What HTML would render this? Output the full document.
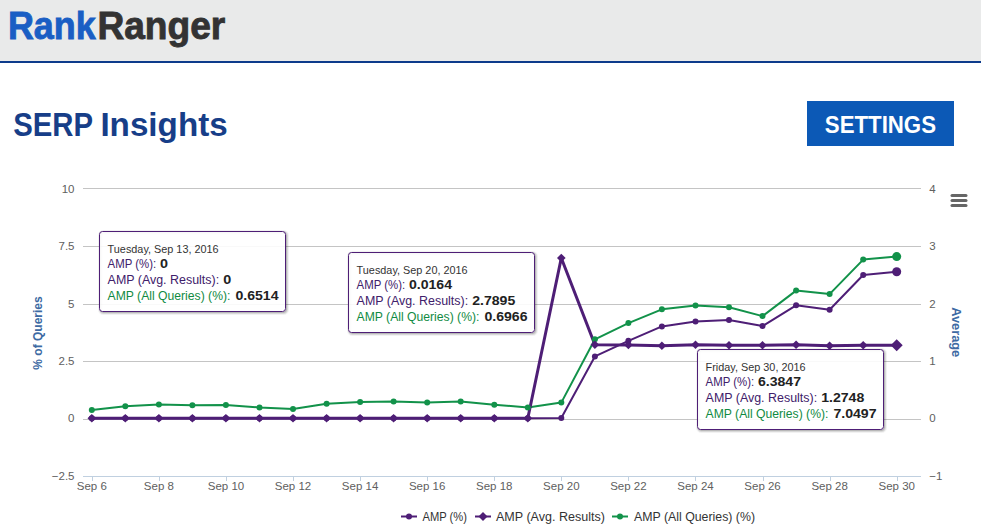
<!DOCTYPE html>
<html><head><meta charset="utf-8"><style>
html,body{margin:0;padding:0;width:981px;height:529px;overflow:hidden;background:#fff;}
svg{position:absolute;left:0;top:0;font-family:"Liberation Sans",sans-serif;}
</style></head><body>
<svg width="981" height="529" viewBox="0 0 981 529">
<rect x="0" y="0" width="981" height="61" fill="#e9eaea"/>
<rect x="0" y="61" width="981" height="2" fill="#0d3b8b"/>
<text x="7.90" y="39.20" font-size="39.4" font-weight="bold" fill="#1a5ec4" textLength="87.80" lengthAdjust="spacingAndGlyphs" stroke="#1a5ec4" stroke-width="0.9">Rank</text>
<text x="97.40" y="39.20" font-size="39.4" font-weight="bold" fill="#333333" textLength="127.90" lengthAdjust="spacingAndGlyphs" stroke="#333333" stroke-width="0.9">Ranger</text>
<text x="13.20" y="135.60" font-size="32.5" font-weight="bold" fill="#173e88" textLength="79.90" lengthAdjust="spacingAndGlyphs">SERP</text>
<text x="100.40" y="135.60" font-size="32.5" font-weight="bold" fill="#173e88" textLength="127.30" lengthAdjust="spacingAndGlyphs">Insights</text>
<rect x="807" y="101" width="147" height="45" fill="#0c59b6"/>
<text x="824.80" y="132.50" font-size="23.5" font-weight="bold" fill="#ffffff" textLength="111.20" lengthAdjust="spacingAndGlyphs">SETTINGS</text>
<line x1="83" y1="188.5" x2="921" y2="188.5" stroke="#c4c4c4" stroke-width="1"/>
<line x1="83" y1="246.5" x2="921" y2="246.5" stroke="#c4c4c4" stroke-width="1"/>
<line x1="83" y1="304.5" x2="921" y2="304.5" stroke="#c4c4c4" stroke-width="1"/>
<line x1="83" y1="361.5" x2="921" y2="361.5" stroke="#c4c4c4" stroke-width="1"/>
<line x1="83" y1="419.5" x2="921" y2="419.5" stroke="#c4c4c4" stroke-width="1"/>
<line x1="83" y1="476.5" x2="921" y2="476.5" stroke="#c0d0e0" stroke-width="1"/>
<line x1="92.5" y1="476" x2="92.5" y2="481" stroke="#c0d0e0" stroke-width="1"/>
<line x1="159.5" y1="476" x2="159.5" y2="481" stroke="#c0d0e0" stroke-width="1"/>
<line x1="226.5" y1="476" x2="226.5" y2="481" stroke="#c0d0e0" stroke-width="1"/>
<line x1="293.5" y1="476" x2="293.5" y2="481" stroke="#c0d0e0" stroke-width="1"/>
<line x1="360.5" y1="476" x2="360.5" y2="481" stroke="#c0d0e0" stroke-width="1"/>
<line x1="427.5" y1="476" x2="427.5" y2="481" stroke="#c0d0e0" stroke-width="1"/>
<line x1="494.5" y1="476" x2="494.5" y2="481" stroke="#c0d0e0" stroke-width="1"/>
<line x1="561.5" y1="476" x2="561.5" y2="481" stroke="#c0d0e0" stroke-width="1"/>
<line x1="628.5" y1="476" x2="628.5" y2="481" stroke="#c0d0e0" stroke-width="1"/>
<line x1="695.5" y1="476" x2="695.5" y2="481" stroke="#c0d0e0" stroke-width="1"/>
<line x1="763.5" y1="476" x2="763.5" y2="481" stroke="#c0d0e0" stroke-width="1"/>
<line x1="830.5" y1="476" x2="830.5" y2="481" stroke="#c0d0e0" stroke-width="1"/>
<line x1="897.5" y1="476" x2="897.5" y2="481" stroke="#c0d0e0" stroke-width="1"/>
<text x="74.50" y="193.00" font-size="11.5" fill="#606060" text-anchor="end">10</text>
<text x="74.50" y="250.30" font-size="11.5" fill="#606060" text-anchor="end">7.5</text>
<text x="74.50" y="307.60" font-size="11.5" fill="#606060" text-anchor="end">5</text>
<text x="74.50" y="365.00" font-size="11.5" fill="#606060" text-anchor="end">2.5</text>
<text x="74.50" y="422.30" font-size="11.5" fill="#606060" text-anchor="end">0</text>
<text x="74.50" y="479.80" font-size="11.5" fill="#606060" text-anchor="end">−2.5</text>
<text x="929.20" y="193.00" font-size="11.5" fill="#606060">4</text>
<text x="929.20" y="250.30" font-size="11.5" fill="#606060">3</text>
<text x="929.20" y="307.60" font-size="11.5" fill="#606060">2</text>
<text x="929.20" y="365.00" font-size="11.5" fill="#606060">1</text>
<text x="929.20" y="422.30" font-size="11.5" fill="#606060">0</text>
<text x="929.20" y="479.80" font-size="11.5" fill="#606060">−1</text>
<text x="91.80" y="490.00" font-size="11.5" fill="#606060" text-anchor="middle">Sep 6</text>
<text x="158.88" y="490.00" font-size="11.5" fill="#606060" text-anchor="middle">Sep 8</text>
<text x="225.95" y="490.00" font-size="11.5" fill="#606060" text-anchor="middle">Sep 10</text>
<text x="293.03" y="490.00" font-size="11.5" fill="#606060" text-anchor="middle">Sep 12</text>
<text x="360.10" y="490.00" font-size="11.5" fill="#606060" text-anchor="middle">Sep 14</text>
<text x="427.18" y="490.00" font-size="11.5" fill="#606060" text-anchor="middle">Sep 16</text>
<text x="494.25" y="490.00" font-size="11.5" fill="#606060" text-anchor="middle">Sep 18</text>
<text x="561.33" y="490.00" font-size="11.5" fill="#606060" text-anchor="middle">Sep 20</text>
<text x="628.40" y="490.00" font-size="11.5" fill="#606060" text-anchor="middle">Sep 22</text>
<text x="695.48" y="490.00" font-size="11.5" fill="#606060" text-anchor="middle">Sep 24</text>
<text x="762.55" y="490.00" font-size="11.5" fill="#606060" text-anchor="middle">Sep 26</text>
<text x="829.62" y="490.00" font-size="11.5" fill="#606060" text-anchor="middle">Sep 28</text>
<text x="896.70" y="490.00" font-size="11.5" fill="#606060" text-anchor="middle">Sep 30</text>
<text transform="translate(41.5 333) rotate(-90)" text-anchor="middle" font-size="12" font-weight="bold" fill="#3d6aa3">% of Queries</text>
<text transform="translate(952 332.2) rotate(90)" text-anchor="middle" font-size="12" font-weight="bold" fill="#3d6aa3" textLength="50" lengthAdjust="spacingAndGlyphs">Average</text>
<line x1="952" y1="195.5" x2="966" y2="195.5" stroke="#666" stroke-width="3" stroke-linecap="round"/>
<line x1="952" y1="200.5" x2="966" y2="200.5" stroke="#666" stroke-width="3" stroke-linecap="round"/>
<line x1="952" y1="205.5" x2="966" y2="205.5" stroke="#666" stroke-width="3" stroke-linecap="round"/>
<path d="M91.8 410.0 L125.3 406.2 L158.9 404.4 L192.4 405.2 L225.9 404.9 L259.5 407.5 L293.0 409.0 L326.6 403.7 L360.1 402.0 L393.6 401.4 L427.2 402.5 L460.7 401.4 L494.3 404.8 L527.8 407.4 L561.3 402.6 L594.9 339.3 L628.4 323.1 L661.9 309.3 L695.5 305.4 L729.0 307.3 L762.5 316.1 L796.1 290.6 L829.6 294.1 L863.2 259.6 L896.7 256.6" fill="none" stroke="#12924a" stroke-width="2" stroke-linejoin="round"/>
<path d="M91.8 418.3 L125.3 418.3 L158.9 418.3 L192.4 418.3 L225.9 418.3 L259.5 418.3 L293.0 418.3 L326.6 418.3 L360.1 418.3 L393.6 418.3 L427.2 418.3 L460.7 418.3 L494.3 418.3 L527.8 418.3 L561.3 418.0 L594.9 356.4 L628.4 340.8 L661.9 326.4 L695.5 321.4 L729.0 320.0 L762.5 326.1 L796.1 305.3 L829.6 309.7 L863.2 275.0 L896.7 271.7" fill="none" stroke="#4e1e76" stroke-width="2" stroke-linejoin="round"/>
<path d="M91.8 418.3 L125.3 418.3 L158.9 418.3 L192.4 418.3 L225.9 418.3 L259.5 418.3 L293.0 418.3 L326.6 418.3 L360.1 418.3 L393.6 418.3 L427.2 418.3 L460.7 418.3 L494.3 418.3 L527.8 418.3 L561.3 258.0 L594.9 344.7 L628.4 345.0 L661.9 345.7 L695.5 344.7 L729.0 345.2 L762.5 345.2 L796.1 344.7 L829.6 345.7 L863.2 345.2 L896.7 345.3" fill="none" stroke="#4e1e76" stroke-width="3" stroke-linejoin="round"/>
<circle cx="91.8" cy="410.0" r="3" fill="#12924a"/>
<circle cx="125.3" cy="406.2" r="3" fill="#12924a"/>
<circle cx="158.9" cy="404.4" r="3" fill="#12924a"/>
<circle cx="192.4" cy="405.2" r="3" fill="#12924a"/>
<circle cx="225.9" cy="404.9" r="3" fill="#12924a"/>
<circle cx="259.5" cy="407.5" r="3" fill="#12924a"/>
<circle cx="293.0" cy="409.0" r="3" fill="#12924a"/>
<circle cx="326.6" cy="403.7" r="3" fill="#12924a"/>
<circle cx="360.1" cy="402.0" r="3" fill="#12924a"/>
<circle cx="393.6" cy="401.4" r="3" fill="#12924a"/>
<circle cx="427.2" cy="402.5" r="3" fill="#12924a"/>
<circle cx="460.7" cy="401.4" r="3" fill="#12924a"/>
<circle cx="494.3" cy="404.8" r="3" fill="#12924a"/>
<circle cx="527.8" cy="407.4" r="3" fill="#12924a"/>
<circle cx="561.3" cy="402.6" r="3" fill="#12924a"/>
<circle cx="594.9" cy="339.3" r="3" fill="#12924a"/>
<circle cx="628.4" cy="323.1" r="3" fill="#12924a"/>
<circle cx="661.9" cy="309.3" r="3" fill="#12924a"/>
<circle cx="695.5" cy="305.4" r="3" fill="#12924a"/>
<circle cx="729.0" cy="307.3" r="3" fill="#12924a"/>
<circle cx="762.5" cy="316.1" r="3" fill="#12924a"/>
<circle cx="796.1" cy="290.6" r="3" fill="#12924a"/>
<circle cx="829.6" cy="294.1" r="3" fill="#12924a"/>
<circle cx="863.2" cy="259.6" r="3" fill="#12924a"/>
<circle cx="896.7" cy="256.6" r="4.5" fill="#12924a"/>
<circle cx="91.8" cy="418.3" r="3" fill="#4e1e76"/>
<circle cx="125.3" cy="418.3" r="3" fill="#4e1e76"/>
<circle cx="158.9" cy="418.3" r="3" fill="#4e1e76"/>
<circle cx="192.4" cy="418.3" r="3" fill="#4e1e76"/>
<circle cx="225.9" cy="418.3" r="3" fill="#4e1e76"/>
<circle cx="259.5" cy="418.3" r="3" fill="#4e1e76"/>
<circle cx="293.0" cy="418.3" r="3" fill="#4e1e76"/>
<circle cx="326.6" cy="418.3" r="3" fill="#4e1e76"/>
<circle cx="360.1" cy="418.3" r="3" fill="#4e1e76"/>
<circle cx="393.6" cy="418.3" r="3" fill="#4e1e76"/>
<circle cx="427.2" cy="418.3" r="3" fill="#4e1e76"/>
<circle cx="460.7" cy="418.3" r="3" fill="#4e1e76"/>
<circle cx="494.3" cy="418.3" r="3" fill="#4e1e76"/>
<circle cx="527.8" cy="418.3" r="3" fill="#4e1e76"/>
<circle cx="561.3" cy="418.0" r="3" fill="#4e1e76"/>
<circle cx="594.9" cy="356.4" r="3" fill="#4e1e76"/>
<circle cx="628.4" cy="340.8" r="3" fill="#4e1e76"/>
<circle cx="661.9" cy="326.4" r="3" fill="#4e1e76"/>
<circle cx="695.5" cy="321.4" r="3" fill="#4e1e76"/>
<circle cx="729.0" cy="320.0" r="3" fill="#4e1e76"/>
<circle cx="762.5" cy="326.1" r="3" fill="#4e1e76"/>
<circle cx="796.1" cy="305.3" r="3" fill="#4e1e76"/>
<circle cx="829.6" cy="309.7" r="3" fill="#4e1e76"/>
<circle cx="863.2" cy="275.0" r="3" fill="#4e1e76"/>
<circle cx="896.7" cy="271.7" r="4.5" fill="#4e1e76"/>
<path d="M91.8 414.0 L96.1 418.3 L91.8 422.6 L87.5 418.3 Z" fill="#4e1e76"/>
<path d="M125.3 414.0 L129.6 418.3 L125.3 422.6 L121.0 418.3 Z" fill="#4e1e76"/>
<path d="M158.9 414.0 L163.2 418.3 L158.9 422.6 L154.6 418.3 Z" fill="#4e1e76"/>
<path d="M192.4 414.0 L196.7 418.3 L192.4 422.6 L188.1 418.3 Z" fill="#4e1e76"/>
<path d="M225.9 414.0 L230.2 418.3 L225.9 422.6 L221.6 418.3 Z" fill="#4e1e76"/>
<path d="M259.5 414.0 L263.8 418.3 L259.5 422.6 L255.2 418.3 Z" fill="#4e1e76"/>
<path d="M293.0 414.0 L297.3 418.3 L293.0 422.6 L288.7 418.3 Z" fill="#4e1e76"/>
<path d="M326.6 414.0 L330.9 418.3 L326.6 422.6 L322.3 418.3 Z" fill="#4e1e76"/>
<path d="M360.1 414.0 L364.4 418.3 L360.1 422.6 L355.8 418.3 Z" fill="#4e1e76"/>
<path d="M393.6 414.0 L397.9 418.3 L393.6 422.6 L389.3 418.3 Z" fill="#4e1e76"/>
<path d="M427.2 414.0 L431.5 418.3 L427.2 422.6 L422.9 418.3 Z" fill="#4e1e76"/>
<path d="M460.7 414.0 L465.0 418.3 L460.7 422.6 L456.4 418.3 Z" fill="#4e1e76"/>
<path d="M494.3 414.0 L498.6 418.3 L494.3 422.6 L490.0 418.3 Z" fill="#4e1e76"/>
<path d="M527.8 414.0 L532.1 418.3 L527.8 422.6 L523.5 418.3 Z" fill="#4e1e76"/>
<path d="M561.3 253.7 L565.6 258.0 L561.3 262.3 L557.0 258.0 Z" fill="#4e1e76"/>
<path d="M594.9 340.4 L599.2 344.7 L594.9 349.0 L590.6 344.7 Z" fill="#4e1e76"/>
<path d="M628.4 340.7 L632.7 345.0 L628.4 349.3 L624.1 345.0 Z" fill="#4e1e76"/>
<path d="M661.9 341.4 L666.2 345.7 L661.9 350.0 L657.6 345.7 Z" fill="#4e1e76"/>
<path d="M695.5 340.4 L699.8 344.7 L695.5 349.0 L691.2 344.7 Z" fill="#4e1e76"/>
<path d="M729.0 340.9 L733.3 345.2 L729.0 349.5 L724.7 345.2 Z" fill="#4e1e76"/>
<path d="M762.5 340.9 L766.8 345.2 L762.5 349.5 L758.2 345.2 Z" fill="#4e1e76"/>
<path d="M796.1 340.4 L800.4 344.7 L796.1 349.0 L791.8 344.7 Z" fill="#4e1e76"/>
<path d="M829.6 341.4 L833.9 345.7 L829.6 350.0 L825.3 345.7 Z" fill="#4e1e76"/>
<path d="M863.2 340.9 L867.5 345.2 L863.2 349.5 L858.9 345.2 Z" fill="#4e1e76"/>
<path d="M896.7 339.3 L902.7 345.3 L896.7 351.3 L890.7 345.3 Z" fill="#4e1e76"/>
<rect x="100.5" y="232.5" width="186" height="80" rx="3" fill="none" stroke="#000" stroke-opacity="0.05" stroke-width="5"/>
<rect x="100.5" y="232.5" width="186" height="80" rx="3" fill="none" stroke="#000" stroke-opacity="0.1" stroke-width="3"/>
<rect x="100.5" y="232.5" width="186" height="80" rx="3" fill="none" stroke="#000" stroke-opacity="0.15" stroke-width="1"/>
<rect x="99.5" y="231.5" width="186" height="80" rx="3" fill="rgba(255,255,255,0.9)" stroke="#4e1e76" stroke-width="1"/>
<text x="107.60" y="252.70" font-size="10.5" fill="#333" textLength="111.00" lengthAdjust="spacingAndGlyphs">Tuesday, Sep 13, 2016</text>
<text x="107.60" y="268.00" font-size="12" fill="#40206a" textLength="48.60" lengthAdjust="spacingAndGlyphs">AMP (%):</text>
<text x="107.60" y="284.00" font-size="12" fill="#40206a" textLength="111.50" lengthAdjust="spacingAndGlyphs">AMP (Avg. Results):</text>
<text x="107.60" y="300.00" font-size="12" fill="#108a42" textLength="122.80" lengthAdjust="spacingAndGlyphs">AMP (All Queries) (%):</text>
<text x="159.90" y="268.00" font-size="12" font-weight="bold" fill="#222" textLength="8.00" lengthAdjust="spacingAndGlyphs">0</text>
<text x="223.20" y="284.00" font-size="12" font-weight="bold" fill="#222" textLength="8.00" lengthAdjust="spacingAndGlyphs">0</text>
<text x="235.40" y="300.00" font-size="12" font-weight="bold" fill="#222" textLength="43.10" lengthAdjust="spacingAndGlyphs">0.6514</text>
<rect x="349.5" y="253.5" width="186" height="80" rx="3" fill="none" stroke="#000" stroke-opacity="0.05" stroke-width="5"/>
<rect x="349.5" y="253.5" width="186" height="80" rx="3" fill="none" stroke="#000" stroke-opacity="0.1" stroke-width="3"/>
<rect x="349.5" y="253.5" width="186" height="80" rx="3" fill="none" stroke="#000" stroke-opacity="0.15" stroke-width="1"/>
<rect x="348.5" y="252.5" width="186" height="80" rx="3" fill="rgba(255,255,255,0.9)" stroke="#4e1e76" stroke-width="1"/>
<text x="356.60" y="273.70" font-size="10.5" fill="#333" textLength="111.00" lengthAdjust="spacingAndGlyphs">Tuesday, Sep 20, 2016</text>
<text x="356.60" y="289.00" font-size="12" fill="#40206a" textLength="48.60" lengthAdjust="spacingAndGlyphs">AMP (%):</text>
<text x="356.60" y="305.00" font-size="12" fill="#40206a" textLength="111.50" lengthAdjust="spacingAndGlyphs">AMP (Avg. Results):</text>
<text x="356.60" y="321.00" font-size="12" fill="#108a42" textLength="122.80" lengthAdjust="spacingAndGlyphs">AMP (All Queries) (%):</text>
<text x="408.90" y="289.00" font-size="12" font-weight="bold" fill="#222" textLength="43.10" lengthAdjust="spacingAndGlyphs">0.0164</text>
<text x="472.20" y="305.00" font-size="12" font-weight="bold" fill="#222" textLength="43.10" lengthAdjust="spacingAndGlyphs">2.7895</text>
<text x="484.40" y="321.00" font-size="12" font-weight="bold" fill="#222" textLength="43.10" lengthAdjust="spacingAndGlyphs">0.6966</text>
<rect x="698.5" y="350.5" width="186" height="80" rx="3" fill="none" stroke="#000" stroke-opacity="0.05" stroke-width="5"/>
<rect x="698.5" y="350.5" width="186" height="80" rx="3" fill="none" stroke="#000" stroke-opacity="0.1" stroke-width="3"/>
<rect x="698.5" y="350.5" width="186" height="80" rx="3" fill="none" stroke="#000" stroke-opacity="0.15" stroke-width="1"/>
<rect x="697.5" y="349.5" width="186" height="80" rx="3" fill="rgba(255,255,255,0.9)" stroke="#4e1e76" stroke-width="1"/>
<text x="705.60" y="370.70" font-size="10.5" fill="#333" textLength="100.00" lengthAdjust="spacingAndGlyphs">Friday, Sep 30, 2016</text>
<text x="705.60" y="386.00" font-size="12" fill="#40206a" textLength="48.60" lengthAdjust="spacingAndGlyphs">AMP (%):</text>
<text x="705.60" y="402.00" font-size="12" fill="#40206a" textLength="111.50" lengthAdjust="spacingAndGlyphs">AMP (Avg. Results):</text>
<text x="705.60" y="418.00" font-size="12" fill="#108a42" textLength="122.80" lengthAdjust="spacingAndGlyphs">AMP (All Queries) (%):</text>
<text x="757.90" y="386.00" font-size="12" font-weight="bold" fill="#222" textLength="43.10" lengthAdjust="spacingAndGlyphs">6.3847</text>
<text x="821.20" y="402.00" font-size="12" font-weight="bold" fill="#222" textLength="43.10" lengthAdjust="spacingAndGlyphs">1.2748</text>
<text x="833.40" y="418.00" font-size="12" font-weight="bold" fill="#222" textLength="43.10" lengthAdjust="spacingAndGlyphs">7.0497</text>
<line x1="401" y1="516.5" x2="417" y2="516.5" stroke="#4e1e76" stroke-width="2"/>
<circle cx="409.0" cy="516.5" r="3" fill="#4e1e76"/>
<text x="422.50" y="521.00" font-size="12" fill="#333" textLength="44.50" lengthAdjust="spacingAndGlyphs">AMP (%)</text>
<line x1="475" y1="516.5" x2="491" y2="516.5" stroke="#4e1e76" stroke-width="2"/>
<path d="M483.0 512 L487.5 516.5 L483.0 521 L478.5 516.5 Z" fill="#4e1e76"/>
<text x="496.00" y="521.00" font-size="12" fill="#333" textLength="109.00" lengthAdjust="spacingAndGlyphs">AMP (Avg. Results)</text>
<line x1="612" y1="516.5" x2="628" y2="516.5" stroke="#12924a" stroke-width="2"/>
<circle cx="620.0" cy="516.5" r="3" fill="#12924a"/>
<text x="634.00" y="521.00" font-size="12" fill="#333" textLength="121.00" lengthAdjust="spacingAndGlyphs">AMP (All Queries) (%)</text>
</svg>
</body></html>
